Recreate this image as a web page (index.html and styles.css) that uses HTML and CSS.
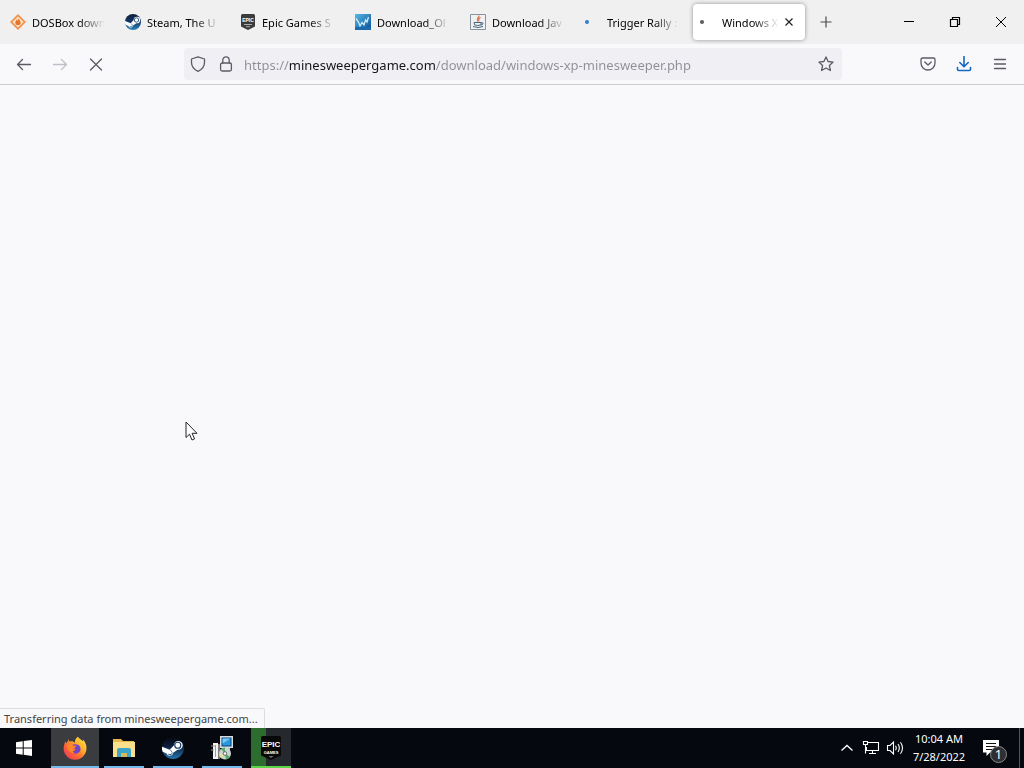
FILE: index.html
```html
<!DOCTYPE html>
<html lang="en">
<head>
<meta charset="utf-8">
<meta name="viewport" content="width=device-width, initial-scale=1">
<title>Windows XP Minesweeper</title>
<link rel="stylesheet" href="styles.css">
</head>
<body>
<svg class="defs" aria-hidden="true">
  <defs>
    <linearGradient id="steam-blue" x1="0" y1="0" x2="0" y2="1"><stop offset="0" stop-color="#101c3c"/><stop offset=".45" stop-color="#123564"/><stop offset="1" stop-color="#2785bd"/></linearGradient>
    <linearGradient id="steam-dark" x1="0" y1="0" x2="0" y2="1"><stop offset="0" stop-color="#05080e"/><stop offset=".4" stop-color="#0b1c38"/><stop offset="1" stop-color="#2476b0"/></linearGradient>
    <linearGradient id="fox-body" x1="1" y1="0" x2="0" y2="1"><stop offset="0" stop-color="#fff04a"/><stop offset=".35" stop-color="#ffb02c"/><stop offset=".6" stop-color="#ff6a33"/><stop offset="1" stop-color="#e82b63"/></linearGradient>
    <linearGradient id="tile-blue" x1="0" y1="0" x2="1" y2="1"><stop offset="0" stop-color="#58b8e4"/><stop offset="1" stop-color="#0b4e96"/></linearGradient>
    <symbol id="steam-arm" viewBox="0 0 24 24">
      <path d="M0 10.5 L8.5 14 L13 9 A4.8 4.8 0 1 1 17 13.8 L12.2 17.3 A3.7 3.7 0 0 1 5 18 L.8 16.2 A12 12 0 0 1 0 10.5Z" fill="#fff"/>
      <circle cx="17.2" cy="9" r="3.3" fill="#fff" stroke="#17406e" stroke-width="1.3"/>
      <path d="M6.4 18.1a2.6 2.6 0 1 0 1.8-3.5l1.5.7a1.8 1.8 0 1 1-1.5 3.4z" fill="#17406e"/>
    </symbol>
  </defs>
</svg>

<header class="browser">
  <div class="titlebar">
    <div class="tabs" role="tablist" aria-label="Open tabs">
      <div class="tab">
        <button class="tab-main" type="button" role="tab" aria-selected="false">
          <svg class="favicon" viewBox="0 0 16 16"><path d="M8 0 16 8 8 16 0 8z" fill="#f0924a"/><path d="M8 2.500 13.500 8 8 13.500 2.500 8z" fill="#fbe6d3"/><path d="M8.500 4c.3 2 2.200 2.400 2.200 4.500a2.700 2.700 0 0 1-5.400 0C5.300 7 6.700 6 7 5c.3.800.4 1.500.5 2C8.400 6 8.300 5 8.500 4z" fill="#e27728"/></svg>
          <span class="tab-label">DOSBox down</span>
        </button>
      </div>
      <div class="tab">
        <button class="tab-main" type="button" role="tab" aria-selected="false">
          <svg class="favicon" viewBox="0 0 24 24"><circle cx="12" cy="12" r="12" fill="url(#steam-blue)"/><use href="#steam-arm" width="24" height="24"/></svg>
          <span class="tab-label">Steam, The U</span>
        </button>
      </div>
      <div class="tab">
        <button class="tab-main" type="button" role="tab" aria-selected="false">
          <svg class="favicon" viewBox="0 0 16 16"><path d="M2.500 0h11Q15 0 15 1.500V12.500L8 16 1 12.500V1.500Q1 0 2.500 0z" fill="#3b3b3b"/><text class="epic-mark" x="8" y="8" font-size="5">EPIC</text><path d="M4 10.500H12M6 12.700H10" stroke="#bbb" stroke-width=".9"/></svg>
          <span class="tab-label">Epic Games S</span>
        </button>
      </div>
      <div class="tab">
        <button class="tab-main" type="button" role="tab" aria-selected="false">
          <svg class="favicon" viewBox="0 0 16 16"><path d="M0 0h16v16H0z" fill="url(#tile-blue)"/><path d="M1 4.500 3.500 8 5 12 7 8.500 9 11 10.500 6 12 8 13.500 3" fill="none" stroke="#c9ecfa" stroke-width="1.300"/><path d="M0 14.500h16" stroke="#1b6aae" stroke-width="3"/></svg>
          <span class="tab-label">Download_Ol</span>
        </button>
      </div>
      <div class="tab">
        <button class="tab-main" type="button" role="tab" aria-selected="false">
          <svg class="favicon" viewBox="0 0 16 16"><path d="M.5.5h15v15H.5z" fill="#eef0f1" stroke="#87939e"/><path d="M8.800 1.500C10 3.500 5.500 4 7.600 7.500M10.500 3.500Q7.500 5 9.200 7.500" fill="none" stroke="#d6653c" stroke-width="1.100"/><path d="M4 8.500h7v2.300Q7.500 12.300 4.500 10.800zM11 8.700q2.500-.2 2 1.200-.4 1-2 1.200M3 12.500q5 2 10 0" fill="none" stroke="#48647d"/></svg>
          <span class="tab-label">Download Jav</span>
        </button>
      </div>
      <div class="tab">
        <button class="tab-main" type="button" role="tab" aria-selected="false">
          <svg class="favicon" viewBox="0 0 16 16"><circle cx="2" cy="8" r="2" fill="#2b7cd3"/></svg>
          <span class="tab-label">Trigger Rally :</span>
        </button>
      </div>
      <div class="tab tab-active">
        <button class="tab-main" type="button" role="tab" aria-selected="true">
          <svg class="favicon" viewBox="0 0 16 16"><circle cx="2" cy="8" r="2" fill="#5b5b60"/></svg>
          <span class="tab-label">Windows X</span>
        </button>
        <button class="tab-close" type="button" aria-label="Close tab"><svg width="16" height="16" viewBox="0 0 16 16"><path d="m4.500 4.500 7 7m0-7-7 7" stroke="#222" stroke-width="1.200"/></svg></button>
      </div>
    </div>
    <button class="new-tab" type="button" aria-label="New tab"><svg width="16" height="16" viewBox="0 0 16 16"><path d="M8 2.500v11M2.500 8h11" stroke="#4b4b50" stroke-width="1.200"/></svg></button>
    <div class="window-controls">
      <button type="button" aria-label="Minimize"><svg width="12" height="12" viewBox="0 0 12 12"><path d="M1 5.500h10" stroke="#000"/></svg></button>
      <button type="button" aria-label="Restore"><svg width="12" height="12" viewBox="0 0 12 12"><path d="M1.500 3.500h7v7h-7zM3.500 3.500v-2h7v7h-2" fill="none" stroke="#000" stroke-width="1.200"/></svg></button>
      <button type="button" aria-label="Close window"><svg width="12" height="12" viewBox="0 0 12 12"><path d="m1 1 10 10M11 1 1 11" stroke="#000"/></svg></button>
    </div>
  </div>

  <nav class="toolbar" aria-label="Navigation">
    <button class="tool" type="button" aria-label="Back"><svg width="16" height="16" viewBox="0 0 16 16"><path d="M14.500 8.500H1.500M6.500 3.500l-5 5 5 5"/></svg></button>
    <button class="tool" type="button" aria-label="Forward" disabled><svg width="16" height="16" viewBox="0 0 16 16"><path d="M1.500 8.500h13M9.500 3.500l5 5-5 5"/></svg></button>
    <button class="tool" type="button" aria-label="Stop"><svg width="16" height="16" viewBox="0 0 16 16"><path d="m2.500 3 11 11M13.500 3l-11 11"/></svg></button>
    <div class="urlbar">
      <button class="url-tool" type="button" aria-label="Tracking protection"><svg width="16" height="16" viewBox="0 0 16 16"><path d="M8 .8 14.500 3v3.500c0 4-2.500 7-6.500 8.800C4 13.500 1.500 10.500 1.500 6.500V3z"/></svg></button>
      <button class="url-tool" type="button" aria-label="Connection secure"><svg width="16" height="16" viewBox="0 0 16 16"><rect x="2.600" y="7" width="10.800" height="8" rx="1.500"/><path d="M4.800 7V4a3.200 3.200 0 0 1 6.400 0v3"/></svg></button>
      <input class="url" type="text" aria-label="Address" spellcheck="false" value="https://minesweepergame.com/download/windows-xp-minesweeper.php">
      <button class="url-tool" type="button" aria-label="Bookmark this page"><svg width="16" height="16" viewBox="0 0 16 16"><path d="m8 .9 2.100 4.600 5 .6-3.700 3.400 1 5L8 12l-4.400 2.500 1-5L.9 6.100l5-.6z"/></svg></button>
    </div>
    <button class="tool" type="button" aria-label="Save to Pocket"><svg width="16" height="16" viewBox="0 0 16 16"><path d="M2.500 2h11q1.500 0 1.500 1.500V7a7 7 0 0 1-14 0V3.500Q1 2 2.500 2zM4.800 6 8 9l3.200-3"/></svg></button>
    <button class="tool tool-download" type="button" aria-label="Downloads"><svg width="16" height="16" viewBox="0 0 16 16"><path d="M8 .5v10M3.800 6.500 8 10.700l4.200-4.200M1.500 11.500v1.700q0 1.300 1.300 1.300h10.400q1.300 0 1.300-1.300v-1.700"/></svg></button>
    <button class="tool" type="button" aria-label="Menu"><svg width="16" height="16" viewBox="0 0 16 16"><path d="M2.500 3.500h11M2.500 8h11M2.500 12.500h11"/></svg></button>
  </nav>
</header>

<main class="page">
  <svg class="pointer" width="13" height="20" viewBox="0 0 13 20" aria-hidden="true"><path d="M1 1v15.500l3.500-3.300L7 19l2.600-1.200-2.500-5.500H12z" fill="#fff" stroke="#222"/></svg>
  <div class="status" role="status">Transferring data from minesweepergame.com...</div>
</main>

<footer class="taskbar">
  <button class="task start" type="button" aria-label="Start"><svg width="18" height="18" viewBox="0 0 18 18"><path d="m1 3.300 6.700-1v6.200H1zM8.700 2.100 17 1v7.500H8.700zM1 9.500h6.700v6.300l-6.700-1zM8.700 9.500H17V17l-8.300-1.200z" fill="#fff"/></svg></button>
  <button class="task running focused" type="button" aria-label="Firefox">
    <svg width="24" height="24" viewBox="0 0 24 24"><path d="M15 .8c1 2 3 2.500 4.500 4.200C20.500 4.500 20 3.500 20 3.500c3 3 4 7 3.300 11A11.500 11.500 0 0 1 .7 14.500C.3 10 1.500 7 2.700 5.200l.7 2.200L6 3v2.500c3-.7 5 .2 6 1.200C11.500 4 13 2 15 .8z" fill="url(#fox-body)"/><path d="M7 10.500c2-2.300 6-3 8.500-1.500 2.500 1.800 2.800 5.500.5 7.500-2.500 2-6 1.200-7.500-1l3-.5 1-2z" fill="#7045ca"/><path d="M3.500 9c3-1.500 6-.5 7 .7h3c-.5 1.500-2.800 1.800-3 3.500-1.500.8-1 2.800 1 4-4 .3-7.500-3-8-8.200z" fill="#ff8628"/></svg>
  </button>
  <button class="task running" type="button" aria-label="File Explorer">
    <svg width="24" height="24" viewBox="0 0 24 24"><path d="M1 3h8l2 2h11v16H1z" fill="#e8b84a"/><path d="M1 6h22v15H1z" fill="#fbe08b"/><path d="M5 21v-7q0-2 2-2h10q2 0 2 2v7h-4v-4H9v4z" fill="#3ba4c8"/><path d="M9 17h6v4H9z" fill="#d5b75d"/></svg>
  </button>
  <button class="task running" type="button" aria-label="Steam"><svg width="22" height="22" viewBox="0 0 24 24"><circle cx="12" cy="12" r="12" fill="url(#steam-dark)"/><use href="#steam-arm" width="24" height="24"/></svg></button>
  <button class="task running" type="button" aria-label="Installer">
    <svg width="24" height="24" viewBox="0 0 24 24"><path d="M10 0h13v12H10z" fill="#d8dde0"/><path d="M11.500 1.500h10v9h-10z" fill="#0b3f78"/><path d="M12.500 2.500h8v7h-8z" fill="#2b96e0"/><path d="M12.500 2.500h8l-8 5z" fill="#75cbf5"/><path d="M14 12h6v2h-6z" fill="#b9bec2"/><path d="M3 7h5v16H3z" fill="#f2f2f2"/><path d="M8 8h2v15H8z" fill="#777"/><path d="M1 10h4M1 14h3M5.500 9v12" stroke="#a19b86"/><circle cx="15" cy="17.500" r="6" fill="#c9d5d2"/><path d="M15 17.500 11 13a6 6 0 0 1 4-1.500zM15 17.500l5 3.300a6 6 0 0 1-4 2.700z" fill="#53ad66"/><path d="m15 17.500-6 1q.5 2.500 2.500 4z" fill="#e2e1a5"/><circle cx="15" cy="17.500" r="1.800" fill="#fff" stroke="#666"/></svg>
  </button>
  <button class="task running epic" type="button" aria-label="Epic Games">
    <svg width="22" height="24" viewBox="0 0 22 24"><path d="M2.500 0h17Q21 0 21 1.500v18L11 24 1 19.500v-18Q1 0 2.500 0z" fill="#080808"/><text class="epic-mark" x="11" y="11" font-size="8">EPIC</text><text class="epic-mark" x="11" y="18" font-size="4">GAMES</text><path d="M8.500 20.500h5l-2.500 1z" fill="#ddd"/></svg>
  </button>
  <div class="tray">
    <button class="tray-item" type="button" aria-label="Show hidden icons"><svg width="14" height="14" viewBox="0 0 14 14"><path d="m1.500 9.500 5.500-5 5.500 5" fill="none" stroke="#fff" stroke-width="1.300"/></svg></button>
    <button class="tray-item" type="button" aria-label="Network"><svg width="18" height="16" viewBox="0 0 18 16"><path d="M6 2.500h10.500v8H4.500V7M10.500 10.500v3M7 13.500h7M1.500 1.500h4v3h-4zM3.500 4.500v9" fill="none" stroke="#fff" stroke-width="1.100"/></svg></button>
    <button class="tray-item" type="button" aria-label="Volume"><svg width="18" height="16" viewBox="0 0 18 16"><path d="M1.500 5.500h2.500l3.500-3.500v12L4 10.500H1.500zM9.500 5.800q1.500 2.200 0 4.400M12 4q2.700 4 0 8M14.500 2.200q4 5.800 0 11.600" fill="none" stroke="#fff" stroke-width="1.100"/></svg></button>
    <button class="clock" type="button"><time>10:04 AM</time><time>7/28/2022</time></button>
    <button class="notice" type="button" aria-label="Notifications"><svg width="18" height="18" viewBox="0 0 18 18"><path d="M1 1h16v12.500H8L4.500 17v-3.500H1z" fill="#fff"/><path d="M4 4.500h10M4 7.500h10M4 10.500h7" stroke="#111"/></svg><span class="badge">1</span></button>
    <button class="show-desktop" type="button" aria-label="Show desktop"></button>
  </div>
</footer>
</body>
</html>
```
FILE: styles.css
```css
* {
  box-sizing: border-box;
}

body {
  display: flex;
  flex-direction: column;
  min-height: 100vh;
  margin: 0;
  background: #f9f9fb;
  color: #15141a;
  font: 11px/18px "Noto Sans", "Open Sans", sans-serif;
}

button {
  display: flex;
  align-items: center;
  justify-content: center;
  margin: 0;
  padding: 0;
  border: 0;
  background: none;
  color: inherit;
  font: inherit;
}

svg {
  display: block;
  flex: none;
}

.defs {
  position: absolute;
  width: 0;
  height: 0;
}

.epic-mark {
  fill: #fff;
  font-family: "Liberation Sans Narrow", "Liberation Sans", sans-serif;
  font-weight: bold;
  text-anchor: middle;
}

.titlebar {
  display: flex;
  height: 44px;
  background: #f0f0f0;
}

.tabs {
  display: flex;
  flex: 0 1 805px;
  min-width: 0;
  margin-left: 2px;
}

.tab {
  display: flex;
  flex: 1 1 0;
  align-items: center;
  min-width: 0;
  margin: 4px 2px 4px 1px;
  padding: 0 8px 0 7px;
  border-radius: 4px;
}

.tab-active {
  background: #fff;
  box-shadow: 0 0 4px rgba(0, 0, 0, 0.4);
}

.tab-main {
  flex: 1;
  justify-content: flex-start;
  gap: 6px;
  min-width: 0;
  height: 100%;
}

.favicon {
  width: 16px;
  height: 16px;
}

.tab-label {
  flex: 1;
  overflow: hidden;
  padding-top: 2px;
  color: #000;
  text-align: left;
  white-space: nowrap;
  -webkit-mask-image: linear-gradient(to left, transparent 2px, #000 28px);
  mask-image: linear-gradient(to left, transparent 2px, #000 28px);
}

.new-tab {
  width: 36px;
  margin-left: 1px;
}

.window-controls {
  display: flex;
  margin-left: auto;
}

.window-controls button {
  width: 46px;
}

.toolbar {
  display: flex;
  align-items: center;
  height: 41px;
  padding: 0 6px;
  border-bottom: 1px solid #cccccf;
}

.tool {
  width: 36px;
  height: 32px;
}

.tool path,
.url-tool path,
.url-tool rect {
  fill: none;
  stroke: #5b5b66;
  stroke-width: 1.3;
  stroke-linecap: round;
  stroke-linejoin: round;
}

.tool:disabled path {
  stroke: #bfbfc9;
}

.tool-download path {
  stroke: #1467c4;
  stroke-width: 1.6;
}

.urlbar {
  display: flex;
  flex: 1;
  align-items: center;
  min-width: 0;
  height: 32px;
  margin: 0 68px 0 70px;
  padding: 0 2px 0 0;
  border-radius: 4px;
  background: #f0f0f4;
}

.url-tool {
  width: 28px;
  height: 28px;
}

.url {
  flex: 1;
  min-width: 0;
  height: 28px;
  padding: 2px 0 0 4px;
  border: 0;
  outline: 0;
  background: linear-gradient(90deg, #8e8e96 49px, #15141a 49px 195px, #8e8e96 195px);
  -webkit-background-clip: text;
  background-clip: text;
  color: transparent;
  font: 13px/20px "Noto Sans", "Open Sans", sans-serif;
}

.page {
  position: relative;
  flex: 1;
}

.pointer {
  position: absolute;
  top: 336px;
  left: 185px;
}

.status {
  position: absolute;
  bottom: 0;
  left: 0;
  padding: 1px 6px 0 4px;
  border: 1px solid #ddd;
  border-width: 1px 1px 0 0;
  border-radius: 0 2px 0 0;
  background: #f9f9fb;
  color: #444;
}

.taskbar {
  display: flex;
  gap: 1px;
  height: 40px;
  background: #05080e;
  color: #fff;
}

.task {
  position: relative;
  width: 48px;
}

.start {
  margin-right: 2px;
}

.running::after {
  position: absolute;
  right: 4px;
  bottom: 0;
  left: 4px;
  height: 2px;
  background: #76b9ed;
  content: "";
}

.focused {
  background: #3b3c40;
}

.focused::after {
  right: 0;
  left: 0;
}

.epic {
  width: 40px;
  margin-left: 4px;
  background: linear-gradient(90deg, #2c6c2e 15px, #25292d 15px);
}

.epic::after {
  right: 0;
  left: 0;
  background: #5bd64b;
}

.tray {
  display: flex;
  margin-left: auto;
}

.tray-item {
  width: 24px;
}

.clock {
  flex-direction: column;
  width: 64px;
}

.notice {
  position: relative;
  justify-content: flex-start;
  width: 48px;
  padding-left: 11px;
}

.badge {
  position: absolute;
  right: 12px;
  bottom: 5px;
  width: 17px;
  height: 17px;
  border: 1px solid #888;
  border-radius: 50%;
  background: #2d2f33;
  font-size: 13px;
  line-height: 15px;
}

.show-desktop {
  width: 5px;
  border-left: 1px solid #555;
}
```
